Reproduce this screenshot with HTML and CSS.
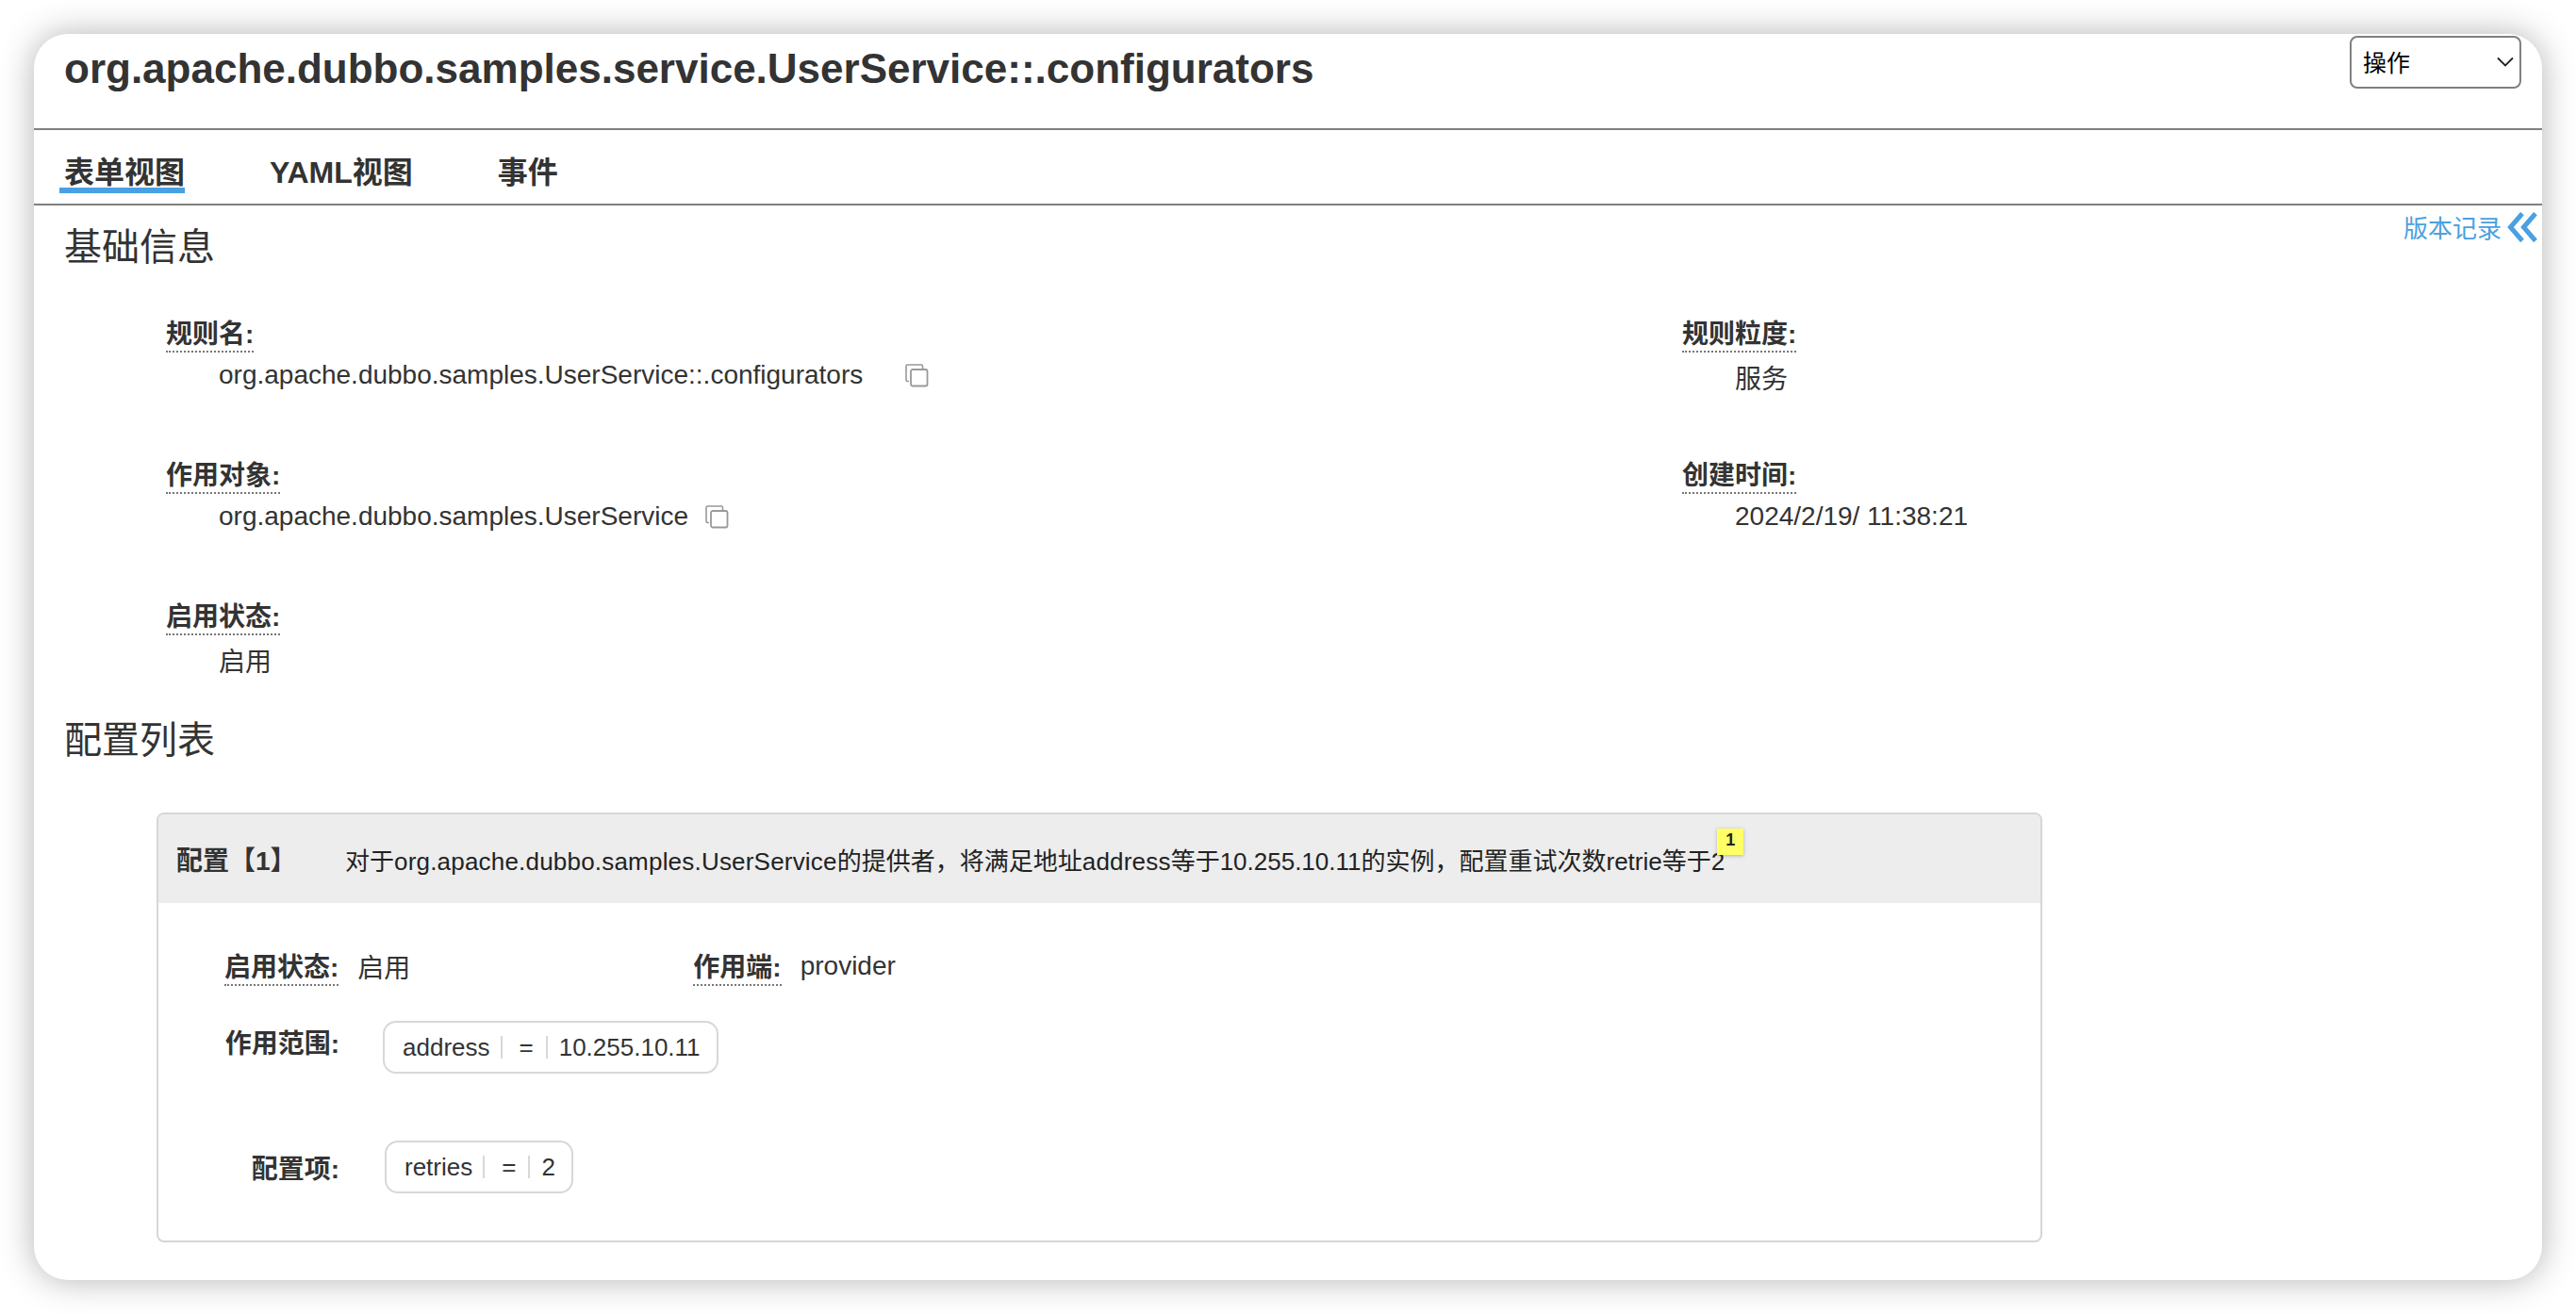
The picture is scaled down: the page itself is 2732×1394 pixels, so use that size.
FILE: index.html
```html
<!DOCTYPE html>
<html lang="zh-CN">
<head>
    <meta charset="UTF-8">
    <title>org.apache.dubbo.samples.service.UserService::.configurators</title>
    <link rel="stylesheet" href="styles.css">
</head>
<body>
    <div class="window">
        <div class="header">
            <h1 class="title">org.apache.dubbo.samples.service.UserService::.configurators</h1>
            <div class="select">
                <span class="select-text">操作</span>
                <svg class="select-arrow" width="18" height="12" viewBox="0 0 18 12"><path d="M1 1.500 L9 9.500 L17 1.500" fill="none" stroke="#222" stroke-width="1.8"/></svg>
            </div>
        </div>

        <div class="tabs">
            <div class="tab active">表单视图</div>
            <div class="tab">YAML视图</div>
            <div class="tab">事件</div>
        </div>

        <div class="section-head">
            <h2 class="section-title">基础信息</h2>
            <div class="history">
                <span>版本记录</span>
                <svg width="32" height="32" viewBox="0 0 32 32"><path d="M16 1.500 L3.500 16 L16 30.500 M30 1.500 L17.500 16 L30 30.500" fill="none" stroke="#4aa0e0" stroke-width="5"/></svg>
            </div>
        </div>

        <div class="info-grid">
            <div class="info-item">
                <div><span class="label">规则名:</span></div>
                <div class="value">
                    <span>org.apache.dubbo.samples.UserService::.configurators</span>
                    <svg class="copy copy-far" width="26" height="26" viewBox="0 0 26 26"><path d="M5 19.5 H3.5 Q2 19.5 2 18 V3.500 Q2 2 3.500 2 H18 Q19.500 2 19.500 3.500 V6" fill="none" stroke="#999" stroke-width="1.6"/><rect x="7" y="7" width="17.500" height="17.500" rx="2" fill="none" stroke="#999" stroke-width="1.800"/></svg>
                </div>
            </div>
            <div class="info-item">
                <div><span class="label">规则粒度:</span></div>
                <div class="value value-cjk">服务</div>
            </div>
            <div class="info-item">
                <div><span class="label">作用对象:</span></div>
                <div class="value">
                    <span>org.apache.dubbo.samples.UserService</span>
                    <svg class="copy" width="26" height="26" viewBox="0 0 26 26"><path d="M5 19.5 H3.5 Q2 19.5 2 18 V3.500 Q2 2 3.500 2 H18 Q19.500 2 19.500 3.500 V6" fill="none" stroke="#999" stroke-width="1.6"/><rect x="7" y="7" width="17.500" height="17.500" rx="2" fill="none" stroke="#999" stroke-width="1.800"/></svg>
                </div>
            </div>
            <div class="info-item">
                <div><span class="label">创建时间:</span></div>
                <div class="value">2024/2/19/ 11:38:21</div>
            </div>
            <div class="info-item">
                <div><span class="label">启用状态:</span></div>
                <div class="value value-cjk">启用</div>
            </div>
        </div>

        <h2 class="section-title list-title">配置列表</h2>

        <div class="card">
            <div class="card-head">
                <span class="card-name">配置【1】</span>
                <span class="card-desc">对于<span class="latin">org.apache.dubbo.samples.UserService</span>的提供者，将满足地址<span class="latin">address</span>等于10.255.10.11的实例，配置重试次数retrie等于2<span class="badge">1</span></span>
            </div>
            <div class="card-body">
                <div class="row row-status">
                    <span class="label">启用状态:</span>
                    <span class="row-value status-value">启用</span>
                    <span class="label">作用端:</span>
                    <span class="row-value side-value">provider</span>
                </div>
                <div class="row row-scope">
                    <span class="plain-label scope-label">作用范围:</span>
                    <div class="pill">
                        <span class="pill-key">address</span>
                        <span class="pill-op">=</span>
                        <span class="pill-val">10.255.10.11</span>
                    </div>
                </div>
                <div class="row row-item">
                    <span class="plain-label">配置项:</span>
                    <div class="pill pill-item">
                        <span class="pill-key">retries</span>
                        <span class="pill-op">=</span>
                        <span class="pill-val">2</span>
                    </div>
                </div>
            </div>
        </div>
    </div>
</body>
</html>
```

FILE: styles.css
```css
* {
    box-sizing: border-box;
}

html, body {
    height: 100%;
}

body {
    margin: 0;
    padding: 36px;
    background-color: #fff;
    color: #333;
    font-family: "Liberation Sans", "Noto Sans CJK SC", sans-serif;
    font-size: 28px;
}

.window {
    width: 2660px;
    height: 1322px;
    background-color: #fff;
    border-radius: 36px;
    box-shadow: 0 0 36px rgba(0, 0, 0, 0.3);
}

.header {
    height: 102px;
    padding: 2px 22px 0 32px;
    display: flex;
    justify-content: space-between;
    align-items: flex-start;
    border-bottom: 2px solid #808080;
}

.title {
    margin: 10px 0 0;
    font-size: 44px;
    line-height: 50px;
    font-weight: 700;
}

.select {
    width: 182px;
    height: 56px;
    padding: 0 6px 0 12px;
    display: flex;
    justify-content: space-between;
    align-items: center;
    border: 2px solid #808080;
    border-radius: 8px;
    color: #000;
    font-size: 25px;
}

.select-text {
    margin-top: -3px;
}

.tabs {
    height: 80px;
    padding-left: 27px;
    display: flex;
    gap: 85px;
    border-bottom: 2px solid #808080;
}

.tab {
    height: 67px;
    padding: 25px 0 0 5px;
    font-size: 32px;
    line-height: 40px;
    font-weight: 700;
}

.tab.active {
    border-bottom: 6px solid #4aa0e0;
}

.section-head {
    display: flex;
    justify-content: space-between;
    align-items: flex-start;
    padding: 0 5px 0 32px;
}

.section-title {
    margin: 0;
    font-size: 40px;
    line-height: 56px;
    font-weight: 400;
}

.section-head .section-title {
    margin-top: 16px;
}

.history {
    margin-top: 4px;
    display: flex;
    align-items: center;
    gap: 6px;
    color: #4aa0e0;
    font-size: 26px;
}

.info-grid {
    margin-top: 48px;
    padding-left: 140px;
    display: grid;
    grid-template-columns: 1608px 1fr;
    grid-auto-rows: 150px;
}

.label {
    display: inline-block;
    height: 36px;
    line-height: 34px;
    font-weight: 700;
    border-bottom: 2px dotted #777;
}

.value {
    margin-top: 6px;
    padding-left: 56px;
    height: 36px;
    line-height: 36px;
    display: flex;
    align-items: center;
}

.value-cjk {
    padding-top: 10px;
}

.copy {
    margin-left: 17px;
}

.copy-far {
    margin-left: 44px;
}

.list-title {
    margin: -31px 0 0 32px;
}

.card {
    width: 2000px;
    height: 456px;
    margin: 49px 0 0 130px;
    border: 2px solid #d6d6d6;
    border-radius: 8px;
}

.card-head {
    height: 94px;
    padding-left: 19px;
    display: flex;
    align-items: center;
    background-color: #ededed;
    border-radius: 6px 6px 0 0;
}

.card-name {
    width: 179px;
    font-weight: 700;
}

.card-desc {
    position: relative;
    color: #222;
    font-size: 26px;
}

.latin {
    letter-spacing: 0.2px;
}

.badge {
    position: absolute;
    top: -14px;
    right: -20px;
    width: 28px;
    height: 28px;
    background-color: #ffff66;
    color: #222;
    font-size: 18px;
    font-weight: 700;
    line-height: 24px;
    text-align: center;
    box-shadow: 0 1px 4px rgba(0, 0, 0, 0.25);
}

.card-body {
    padding-left: 70px;
}

.row {
    display: flex;
    align-items: center;
}

.row-status {
    padding-top: 46px;
    height: 94px;
}

.status-value {
    width: 356px;
    margin-left: 20px;
    margin-top: -7px;
}

.side-value {
    margin-left: 20px;
    margin-top: -6px;
}

.row-scope {
    margin-top: 31px;
}

.row-item {
    margin-top: 71px;
}

.plain-label {
    width: 122px;
    font-weight: 700;
    text-align: right;
    white-space: nowrap;
}

.scope-label {
    margin-top: -12px;
}

.pill {
    height: 56px;
    margin-left: 46px;
    padding: 0 17px 0 19px;
    display: flex;
    align-items: center;
    border: 2px solid #d8d8d8;
    border-radius: 14px;
    font-size: 26px;
}

.pill-item {
    margin-left: 48px;
}

.pill-key,
.pill-op {
    padding-right: 11px;
    margin-right: 12px;
    line-height: 24px;
    border-right: 2px solid #d8d8d8;
}

.pill-op {
    padding-left: 6px;
    padding-right: 13px;
}
```
